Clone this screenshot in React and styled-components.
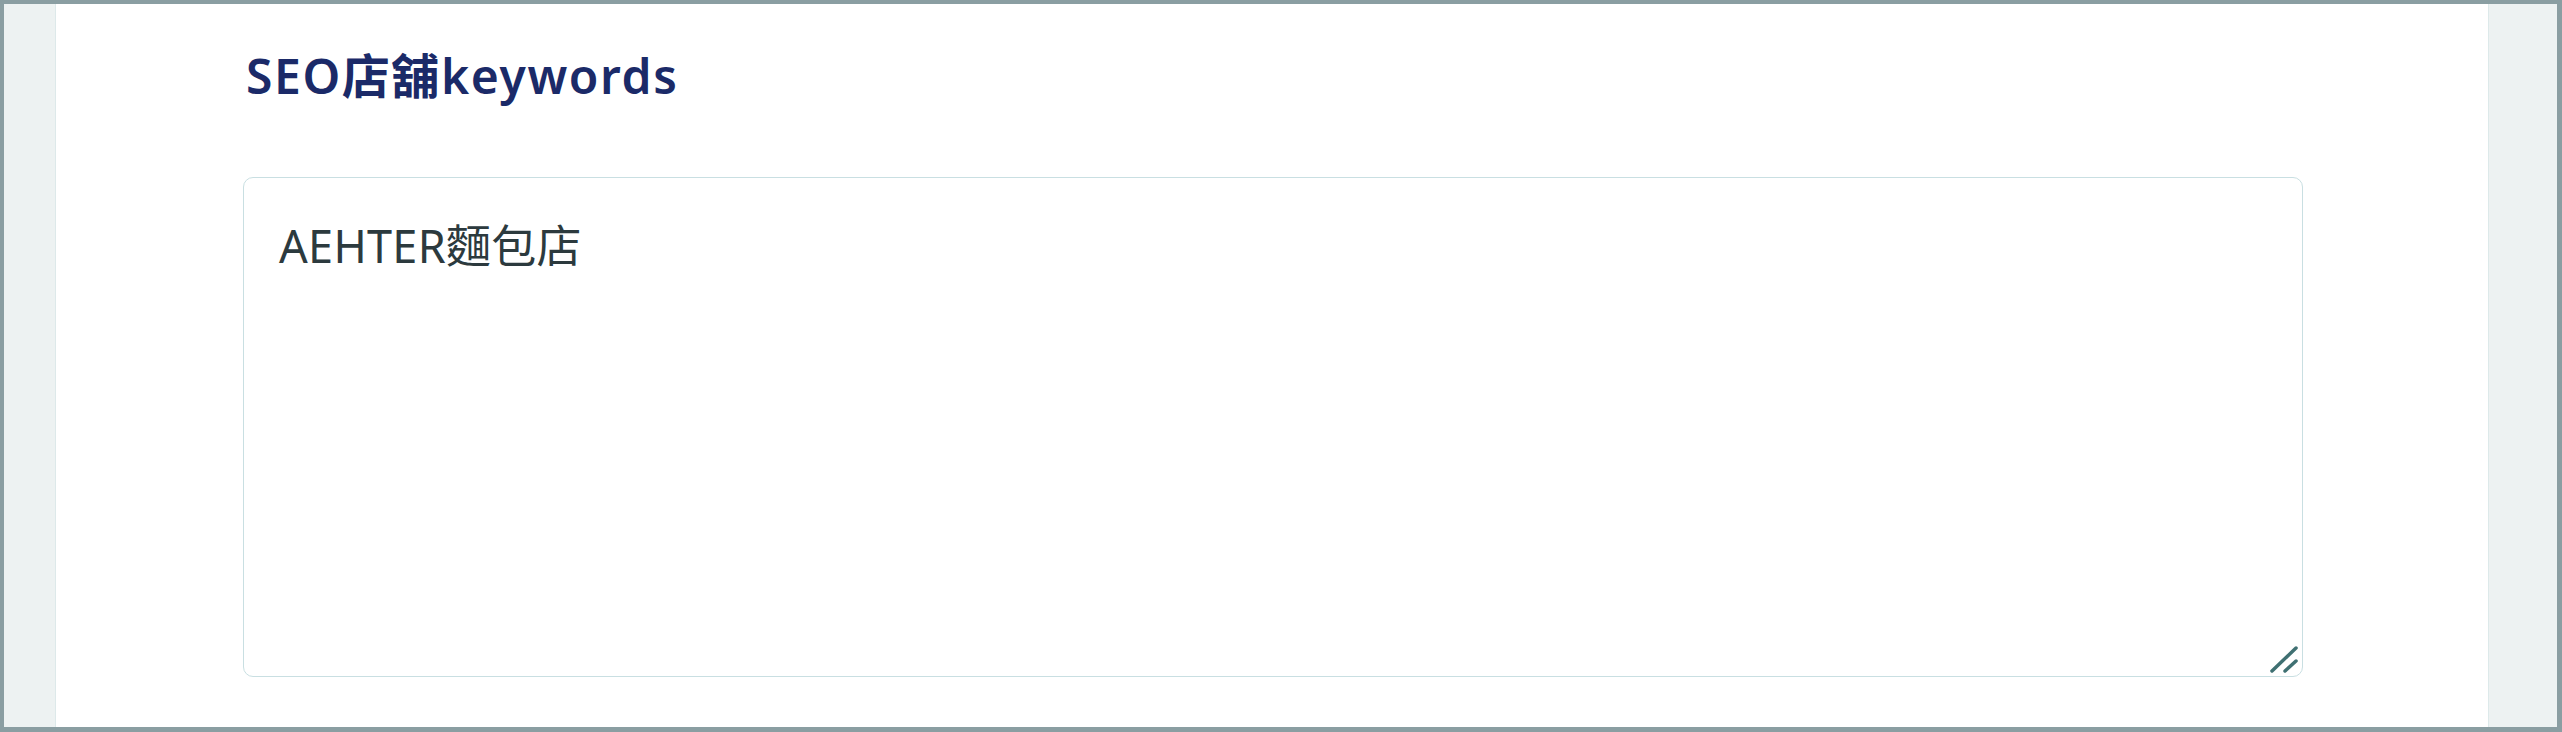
import React from 'react';
import styled, { createGlobalStyle } from 'styled-components';

const GlobalStyle = createGlobalStyle`
  html, body {
    margin: 0;
    padding: 0;
    background: #ffffff;
  }
  * {
    box-sizing: border-box;
  }
`;

const Frame = styled.div`
  width: 2562px;
  height: 732px;
  border-style: solid;
  border-color: #8a9ea2;
  border-width: 4px 5px 5px 4px;
  display: grid;
  grid-template-columns: 52px 1fr 69px;
  background: #ffffff;
  overflow: hidden;
`;

const SideStrip = styled.div`
  background: #edf2f2;
  border-right: ${p => (p.$side === 'left' ? '1px solid #dde9ea' : 'none')};
  border-left: ${p => (p.$side === 'right' ? '1px solid #dde9ea' : 'none')};
`;

const Main = styled.main`
  display: flex;
  flex-direction: column;
  padding: 43px 185px 0 187px;
`;

const Heading = styled.h2`
  margin: 0 0 72px 3px;
  font-family: "Noto Sans", "Noto Sans CJK TC", sans-serif;
  font-weight: 600;
  font-size: 48px;
  letter-spacing: 1.6px;
  line-height: 1.2;
  color: #1b2a68;
`;

const FieldWrap = styled.div`
  position: relative;
  width: 100%;
  height: 500px;
`;

const KeywordsArea = styled.textarea`
  display: block;
  width: 100%;
  height: 100%;
  border: 1px solid #c9dfe2;
  border-radius: 10px;
  padding: 34px 35px;
  font-family: "Noto Sans", "Noto Sans CJK TC", sans-serif;
  font-size: 45px;
  line-height: 1.5;
  letter-spacing: 0.3px;
  color: #2c3a3e;
  background: #ffffff;
  resize: none;
  outline: none;
`;

const Grip = styled.svg`
  position: absolute;
  right: 4px;
  bottom: 2px;
  width: 30px;
  height: 30px;
  pointer-events: none;
`;

export default function App() {
  return (
    <>
      <GlobalStyle />
      <Frame>
        <SideStrip $side="left" />
        <Main>
          <Heading>SEO店舖keywords</Heading>
          <FieldWrap>
            <KeywordsArea defaultValue="AEHTER麵包店" />
            <Grip viewBox="0 0 30 30">
              <line x1="3" y1="26" x2="27" y2="3" stroke="#3f7072" strokeWidth="3.5" strokeLinecap="round" />
              <line x1="16" y1="26" x2="27" y2="16" stroke="#3f7072" strokeWidth="3.5" strokeLinecap="round" />
            </Grip>
          </FieldWrap>
        </Main>
        <SideStrip $side="right" />
      </Frame>
    </>
  );
}
